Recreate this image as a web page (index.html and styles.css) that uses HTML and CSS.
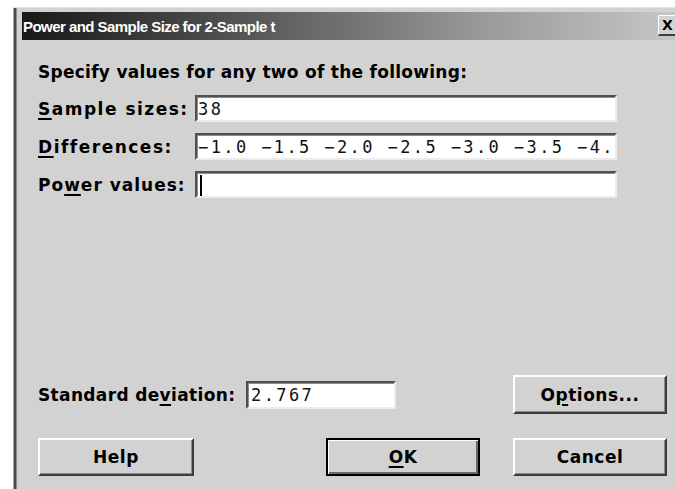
FILE: index.html
```html
<!DOCTYPE html>
<html lang="en">
<head>
<meta charset="utf-8">
<title>Power and Sample Size for 2-Sample t</title>
<link rel="stylesheet" href="styles.css">
</head>
<body>
<div class="desk">
  <div class="window">
    <div class="titlebar">
      <span class="title">Power and Sample Size for 2-Sample t</span>
      <span class="close">X</span>
    </div>
    <div class="content">
      <p class="heading">Specify values for any two of the following:</p>
      <div class="fields">
        <label class="label"><u>S</u>ample sizes:</label>
        <div class="field">38</div>
        <label class="label"><u>D</u>ifferences:</label>
        <div class="field">&minus;1.0 &minus;1.5 &minus;2.0 &minus;2.5 &minus;3.0 &minus;3.5 &minus;4.</div>
        <label class="label label-narrow">Po<u>w</u>er values:</label>
        <div class="field"><span class="caret"></span></div>
      </div>
      <div class="sd-row">
        <label class="label sd-label">Standard de<u>v</u>iation:</label>
        <div class="field sd-field">2.767</div>
        <button class="btn btn-options">O<u>p</u>tions...</button>
      </div>
      <div class="btn-row">
        <button class="btn btn-help">Help</button>
        <button class="btn btn-ok default"><u>O</u>K</button>
        <button class="btn btn-cancel">Cancel</button>
      </div>
    </div>
  </div>
</div>
</body>
</html>
```
FILE: styles.css
```css
html, body {
  margin: 0;
  height: 489px;
  overflow: hidden;
  background: #ffffff;
}

.desk {
  padding: 7px 0 0 13px;
}

/* dialog frame: light outer line, dark double edge on the left */
.window {
  box-sizing: border-box;
  width: 670px;
  height: 482px;
  background: #d2d2d2;
  border-top: 1px solid #e4e4e4;
  padding: 4px 0 0 9px;
  box-shadow: inset 1px 0 0 #a6a6a6, inset 3px 0 0 #4a4a4a, inset 4px 0 0 #8a8a8a;
  display: flex;
  flex-direction: column;
}

.titlebar {
  height: 28px;
  flex: none;
  display: flex;
  align-items: center;
  background: linear-gradient(to right, #181818 0%, #4e4e4e 30%, #9a9a9a 70%, #c8c8c8 100%);
}

.title {
  flex: 1;
  padding-left: 1px;
  color: #ffffff;
  font: bold 15px "Liberation Sans", Arial, sans-serif;
  letter-spacing: -0.55px;
}

.close {
  box-sizing: border-box;
  width: 20px;
  height: 21px;
  margin-right: 5px;
  margin-top: -2px;
  background: #d2d2d2;
  border-top: 1px solid #ffffff;
  border-left: 1px solid #ffffff;
  border-right: 2px solid #404040;
  border-bottom: 2px solid #404040;
  color: #000000;
  font: bold 14px "DejaVu Sans", sans-serif;
  line-height: 18px;
  text-align: center;
}

.content {
  flex: 1;
  display: flex;
  flex-direction: column;
  padding: 21px 16px 13px 16px;
  font-family: "DejaVu Sans", Verdana, sans-serif;
  font-weight: bold;
  font-size: 17px;
  color: #000000;
}

.heading {
  margin: 0 0 12px 0;
  line-height: 22px;
  letter-spacing: 0.27px;
}

.label {
  line-height: 22px;
  letter-spacing: 1.5px;
  white-space: nowrap;
}

.label-narrow {
  letter-spacing: 1px;
}

u {
  text-decoration-thickness: 2px;
  text-underline-offset: 3px;
}

.fields {
  display: grid;
  grid-template-columns: 157px 422px;
  row-gap: 11px;
  align-items: center;
}

/* sunken edit box */
.field {
  box-sizing: border-box;
  height: 27px;
  background: #ffffff;
  border-top: 2px solid #505050;
  border-left: 2px solid #505050;
  border-right: 2px solid #ececec;
  border-bottom: 2px solid #ececec;
  box-shadow: inset 0 1px 0 #8c8c8c, inset 1px 0 0 #8c8c8c;
  padding: 1px 0 0 1px;
  display: flex;
  align-items: center;
  font: normal 17px "DejaVu Sans Mono", "Liberation Mono", monospace;
  letter-spacing: 2.4px;
  color: #111111;
  white-space: nowrap;
  overflow: hidden;
}

.caret {
  width: 2px;
  height: 21px;
  background: #000000;
  margin-left: 2px;
}

.sd-row {
  margin-top: auto;
  margin-bottom: 24px;
  display: flex;
  align-items: center;
}

.sd-label {
  width: 208px;
  letter-spacing: 0.35px;
}

.sd-field {
  width: 150px;
  height: 28px;
  padding-left: 3px;
}

.btn {
  box-sizing: border-box;
  height: 38px;
  width: 154px;
  padding: 0;
  background: #d2d2d2;
  border-top: 2px solid #ffffff;
  border-left: 2px solid #ffffff;
  border-right: 2px solid #3c3c3c;
  border-bottom: 2px solid #3c3c3c;
  box-shadow: inset -1px -1px 0 #8c8c8c;
  font-family: "DejaVu Sans", Verdana, sans-serif;
  font-weight: bold;
  font-size: 17px;
  letter-spacing: 0.5px;
  color: #000000;
}

.btn-options {
  margin-left: auto;
  height: 39px;
}

.btn-row {
  display: flex;
}

.btn-help {
  width: 156px;
}

.btn-ok {
  margin-left: auto;
}

.btn-cancel {
  margin-left: 33px;
}

/* default button carries an extra black outline */
.default {
  border: 2px solid #000000;
  box-shadow: inset 1px 1px 0 #ffffff, inset -2px -2px 0 #6a6a6a;
}
```
